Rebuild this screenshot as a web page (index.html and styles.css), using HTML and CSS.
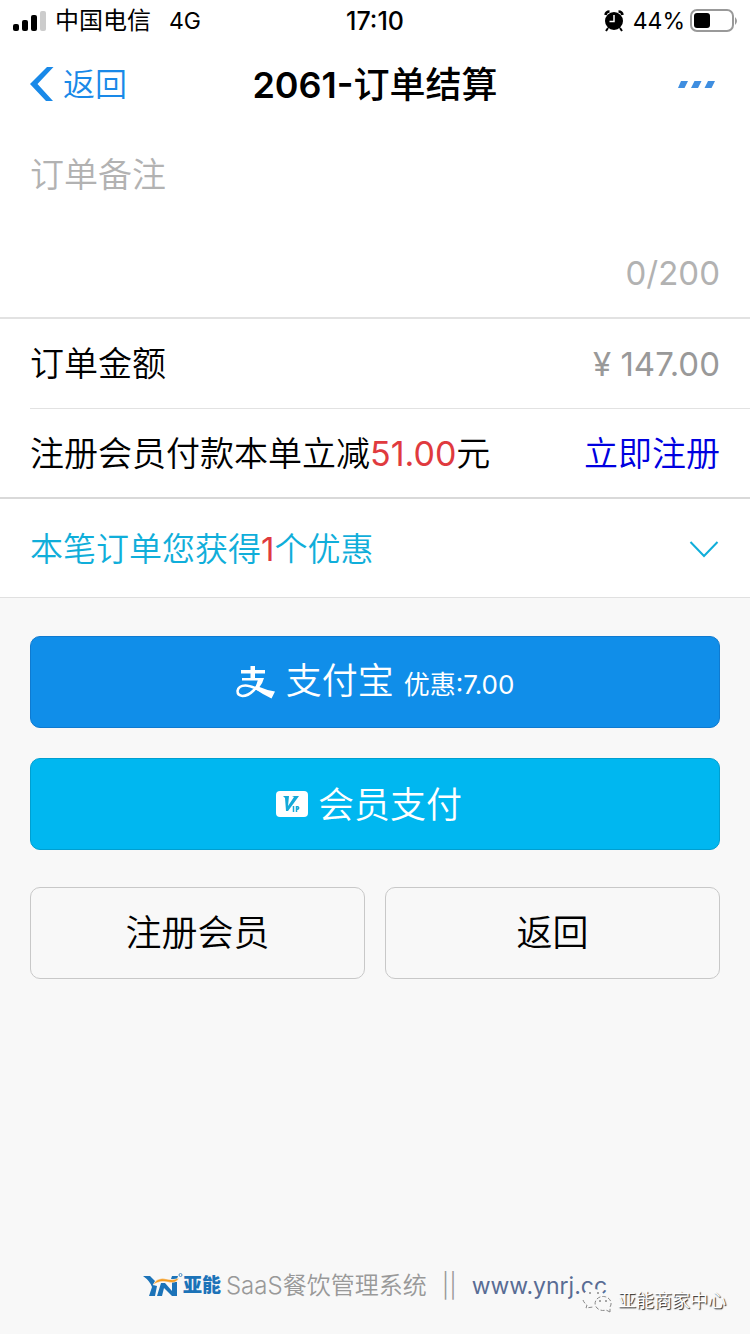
FILE: index.html
```html
<!DOCTYPE html>
<html lang="zh-CN">
<head>
<meta charset="utf-8">
<meta name="viewport" content="width=device-width, initial-scale=1">
<title>2061-订单结算</title>
<link rel="stylesheet" href="styles.css">
</head>
<body>
<div class="page">
  <header class="top">
    <div class="status">
      <div class="status-left">
        <svg class="signal" width="34" height="22" viewBox="0 0 34 22" aria-hidden="true">
          <rect x="1" y="14" width="6" height="7" rx="2"/><rect x="10" y="10" width="6" height="11" rx="2"/><rect x="19" y="5" width="6" height="16" rx="2"/><rect x="28" y="1" width="6" height="20" rx="2" fill="#ccc"/>
        </svg>
        <span>中国电信</span>
        <span class="network">4G</span>
      </div>
      <span class="clock">17:10</span>
      <div class="status-right">
        <svg class="alarm" width="20" height="22" viewBox="0 0 20 22" aria-hidden="true">
          <circle cx="10" cy="11" r="9"/>
          <path d="M1.500 5Q2 1.500 5.500 1.500M18.500 5Q18 1.500 14.500 1.500" fill="none" stroke="#000" stroke-width="2.600"/>
          <path d="M4 18L2 21M16 18L18 21" stroke="#000" stroke-width="2"/>
          <path d="M10 5v6.500H5.500" fill="none" stroke="#fff" stroke-width="1.500"/>
        </svg>
        <span>44%</span>
        <svg class="battery" width="48" height="24" viewBox="0 0 48 24" aria-hidden="true">
          <rect x="1" y="1" width="42" height="21" rx="6" fill="none" stroke="#999" stroke-width="2"/>
          <rect x="4" y="4" width="16" height="15" rx="3"/>
          <path d="M45 8q4 4 0 8z" fill="#999"/>
        </svg>
      </div>
    </div>
    <nav class="nav">
      <button class="back" type="button">
        <svg width="24" height="34" viewBox="0 0 24 34" aria-hidden="true"><path d="M0 17L17 0H23.500L7.500 17L23 34H16Z" fill="#1989e8"/></svg>
        <span>返回</span>
      </button>
      <h1 class="title"><span class="table-no">2061-</span>订单结算</h1>
      <button class="more" type="button" aria-label="更多">
        <svg width="37" height="8" viewBox="0 0 37 8" aria-hidden="true"><path d="M3 1H10L6.500 8H0ZM16.500 1H23.500L20 8H13ZM30 1H37L33.500 8H26.500Z" fill="#3f8ee0"/></svg>
      </button>
    </nav>
  </header>

  <main>
    <section class="remark">
      <textarea class="remark-input" rows="1" maxlength="200" placeholder="订单备注" aria-label="订单备注"></textarea>
      <div class="counter">0/200</div>
    </section>

    <section class="cells">
      <div class="cell"><span>订单金额</span><span class="amount">¥ 147.00</span></div>
      <div class="cell cell-split"><span>注册会员付款本单立减<em>51.00</em>元</span><a href="#register">立即注册</a></div>
    </section>

    <button class="offers" type="button">
      <span>本笔订单您获得<em>1</em>个优惠</span>
      <svg width="30" height="18" viewBox="0 0 30 18" aria-hidden="true"><path d="M1.500 2L15 16L28.500 2" fill="none" stroke="#10aeda" stroke-width="2"/></svg>
    </button>

    <section class="actions">
      <button class="btn alipay" type="button">
        <svg width="40" height="34" viewBox="0 0 40 34" aria-hidden="true">
          <path d="M5 5H29V8.500H5ZM14.500 1H19V15H14.500ZM6 13H27V15.500H6Z" fill="#fff"/>
          <path d="M24.500 14Q23 20 17.500 25.500Q12 31 6.500 31Q1.500 30.500 1.500 26Q2.500 20.500 9.500 20.500C16 20.500 22 25 32 28.500" fill="none" stroke="#fff" stroke-width="2.500"/>
          <path d="M22.500 13H28Q26.500 18.500 23.500 22Q30 25 39 26.500L35.500 33.500Q27 29.500 19 24Z" fill="#fff"/>
        </svg>
        <span>支付宝 <small>优惠:7.00</small></span>
      </button>
      <button class="btn member" type="button">
        <svg width="32" height="26" viewBox="0 0 32 26" aria-hidden="true">
          <rect width="32" height="26" rx="4" fill="#fff"/>
          <path d="M7 5H13L12 15L18 6L16 5H23L12 20H10L9 7Z" fill="#14a9d8"/>
          <path d="M17.500 15V21M20.500 21V15.700H22Q24 17.500 20.500 18.500" fill="none" stroke="#14a9d8" stroke-width="1.500"/>
        </svg>
        <span>会员支付</span>
      </button>
      <div class="pair">
        <button class="btn plain" type="button">注册会员</button>
        <button class="btn plain" type="button">返回</button>
      </div>
    </section>
  </main>

  <footer class="footer">
    <svg width="40" height="26" viewBox="0 0 40 26" aria-hidden="true">
      <path d="M0 3H7L12 8L10 12L14 13L12 23H6L9 14Q7 8 0 3Z" fill="#1c73b8"/>
      <path d="M18 10H22L29 18V9H34V23H29L21 15L19 23H14Z" fill="#1c73b8"/>
      <path d="M29 3H35L34 6H28Z" fill="#1c73b8"/>
      <path d="M10 12Q14 4 23 6Q30 8 36 5Q33 11 25 9Q16 7 10 12Z" fill="#f49b20" stroke="#f8f8f8" stroke-width="0.500"/>
      <circle cx="37.500" cy="2" r="1.500" fill="none" stroke="#4b8fc6"/>
    </svg>
    <b class="brand">亚能</b>
    <span class="system">SaaS餐饮管理系统</span>
    <span class="divider">||</span>
    <a class="site" href="#site">www.ynrj.cc</a>
  </footer>

  <div class="watermark">
    <svg width="32" height="27" viewBox="0 0 32 27" aria-hidden="true">
      <path d="M3 17A11 9 0 0 1 1 9Q3 2 12 2Q20 2 22 8Q12 10 12 19Q8 20 6 19L3 21Z" fill="#f8f8f8"/>
      <path d="M28 25L24 23A8 7 0 1 1 28 20Z" fill="#f8f8f8" stroke="#888" stroke-dasharray="4 2"/>
      <path d="M1 13Q2 16 5 18L4 21L11 20" fill="none" stroke="#888" stroke-dasharray="4 2"/>
      <path d="M7 6h2M15 6h2M17 14h2M23 14h2" stroke="#555"/>
    </svg>
    <span>亚能商家中心</span>
  </div>
</div>
</body>
</html>
```
FILE: styles.css
```css
* { box-sizing: border-box; }

body {
  margin: 0;
  background: #f8f8f8;
  color: #000;
  font: 350 34px/48px Inter, "Noto Sans CJK SC", sans-serif;
}

button {
  margin: 0;
  padding: 0;
  border: 0;
  background: none;
  color: inherit;
  font: inherit;
}

svg { display: block; flex: none; }
em { color: #e03a3e; font-style: normal; font-weight: 400; }

.page {
  position: relative;
  display: flex;
  flex-direction: column;
  min-height: 100vh;
}

.top { background: #fff; }

.status {
  display: grid;
  grid-template-columns: 1fr auto 1fr;
  align-items: center;
  height: 40px;
  padding: 0 12px;
  font-size: 24px;
  font-weight: 400;
  line-height: 40px;
}

.status span { padding-top: 1px; }
.status-left, .status-right { display: flex; align-items: center; }
.status-left { gap: 9px; }
.network { margin-left: 9px; font-size: 23px; }
.clock { font-size: 25px; font-weight: 500; }
.status-right { justify-content: flex-end; gap: 5px; font-size: 23px; }
.alarm { margin-right: 4px; }

.nav {
  display: grid;
  grid-template-columns: 1fr auto 1fr;
  align-items: center;
  height: 88px;
  padding: 0 30px;
}

.back {
  display: flex;
  align-items: center;
  gap: 9px;
  color: #1989e8;
  font-size: 32px;
}

.back span, .title, .btn span { padding-top: 2px; }
.title { margin: 0; font-size: 36px; font-weight: 500; }
.table-no { font-weight: 600; }
.more { justify-self: end; padding: 20px 5px 20px 0; }

.remark {
  padding: 23px 30px 20px;
  border-bottom: 2px solid #e2e2e2;
  background: #fff;
}

.remark-input {
  display: block;
  width: 100%;
  height: 98px;
  padding: 0;
  border: 0;
  outline: 0;
  background: none;
  resize: none;
  font: inherit;
}

.remark-input::placeholder { color: #b2b2b2; opacity: 1; }
.counter { color: #b2b2b2; font-size: 33px; font-weight: 400; text-align: right; }

.cells { background: #fff; border-bottom: 2px solid #d9d9d9; }

.cell {
  display: flex;
  align-items: center;
  justify-content: space-between;
  margin-left: 30px;
  padding: 21px 30px 20px 0;
}

.cell-split { border-top: 1px solid #e2e2e2; padding-bottom: 19px; }
.cell a { color: #0000e0; text-decoration: none; }
.amount { color: #999; font-size: 33px; font-weight: 400; }

.offers {
  display: flex;
  align-items: center;
  justify-content: space-between;
  width: 100%;
  padding: 26px 31px 24px 30px;
  border-bottom: 1px solid #e0e0e0;
  background: #fff;
  color: #10aeda;
  font-size: 33px;
}

.actions { padding: 38px 30px; }

.btn {
  display: flex;
  align-items: center;
  justify-content: center;
  gap: 10px;
  width: 100%;
  height: 92px;
  border: 1px solid;
  border-radius: 10px;
  font-size: 36px;
}

.btn small { font-size: 26px; font-weight: 400; }
.alipay { border-color: #0f7ad0; background: #108ee9; color: #fff; }
.member { margin-top: 30px; padding-right: 12px; border-color: #009fd0; background: #00b7f0; color: #fff; }
.pair { display: grid; grid-template-columns: 1fr 1fr; gap: 20px; margin-top: 37px; }
.plain { border-color: #c8c8c8; background: #f8f8f8; }

.footer {
  display: flex;
  align-items: center;
  justify-content: center;
  margin-top: auto;
  padding-bottom: 24px;
  color: #999;
  font-size: 24px;
}

.brand { color: #1c73b8; font-size: 19px; font-weight: 900; }
.system { margin-left: 5px; }
.divider { margin: 0 15px; }
.site { color: #586c94; font-size: 23px; font-weight: 400; text-decoration: none; }

.watermark {
  position: absolute;
  right: 24px;
  bottom: 20px;
  display: flex;
  align-items: center;
  gap: 4px;
  color: #fff;
  font-size: 18px;
  font-weight: 400;
  line-height: 26px;
  text-shadow: 1px 1px 1px #222;
}
```
